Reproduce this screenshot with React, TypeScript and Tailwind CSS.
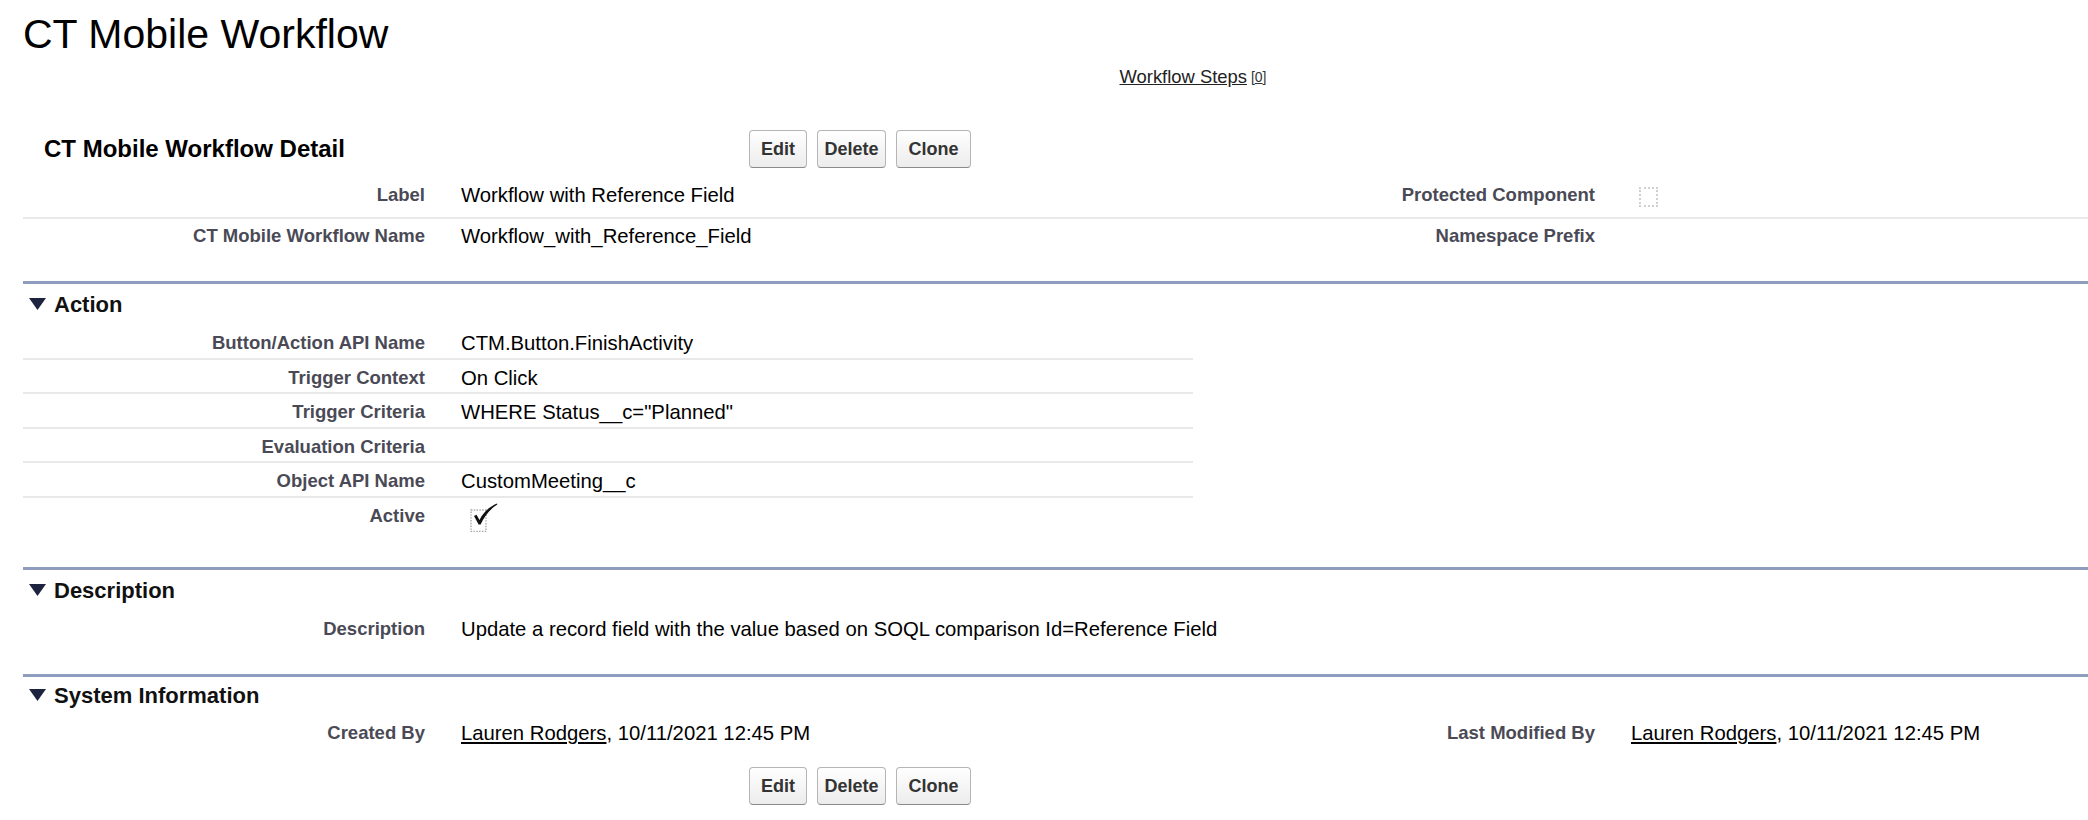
import React from 'react';

type Cell = { label: string; value?: React.ReactNode };

function Twisty() {
  return (
    <svg width="17" height="12" viewBox="0 0 17 12" className="mr-[8px] shrink-0">
      <polygon points="0,0 17,0 8.5,12" fill="#1c2440" />
    </svg>
  );
}

function EmptyCheckbox() {
  return <div className="ml-[8px] mt-[11px] w-[19px] h-[20px] border-2 border-dotted border-[#d0d0d0]" />;
}

function CheckedBox() {
  return (
    <svg width="32" height="30" viewBox="0 0 32 30" className="ml-[1px] mt-[3px]">
      <rect x="3" y="8" width="15" height="21.5" fill="none" stroke="#a8a8a8" strokeWidth="1.4" strokeDasharray="1.4 1.4" />
      <path d="M6 14 L8.5 12.8 L11.5 18 C15 10.5 21 5 29 1.5 L29.3 2.6 C22 7 16.5 14 12.6 22.5 L10.6 22.5 Z" fill="#111" />
    </svg>
  );
}

function Buttons() {
  const btn =
    'h-[38px] text-[18px] font-bold text-[#333] border border-[#b5b5b5] border-b-[#8a8a8a] rounded-[4px] bg-linear-to-b from-white to-[#ececec] flex items-center justify-center';
  return (
    <div className="flex gap-[10px]">
      <button className={`${btn} w-[58px]`}>Edit</button>
      <button className={`${btn} w-[69px]`}>Delete</button>
      <button className={`${btn} w-[75px]`}>Clone</button>
    </div>
  );
}

function Row({
  left,
  right,
  border = true,
  wide = false,
  pt = 'pt-[5px]',
  className = '',
}: {
  left: Cell;
  right?: Cell;
  border?: boolean;
  wide?: boolean;
  pt?: string;
  className?: string;
}) {
  const labelCls = `w-[421px] shrink-0 pr-[19px] ${pt} text-right text-[18.5px] leading-[24px] font-bold text-[#4a4a56]`;
  return (
    <div
      className={`flex ${wide ? 'w-full' : 'w-[1170px]'} ${border ? 'border-b-2 border-[#e9e9e9]' : ''} ${className}`}
    >
      <div className={labelCls}>{left.label}</div>
      <div
        className={`${right || !wide ? 'w-[749px] shrink-0' : 'flex-1'} pl-[17px] ${pt} whitespace-nowrap text-[20.3px] leading-[24px] text-black`}
      >
        {left.value}
      </div>
      {right && (
        <>
          <div className={labelCls}>{right.label}</div>
          <div className="flex-1 pl-[17px] whitespace-nowrap text-[20.3px] leading-[24px] text-black">{right.value}</div>
        </>
      )}
    </div>
  );
}

function Section({ title, headerH, bodyH, children }: { title: string; headerH: string; bodyH: string; children: React.ReactNode }) {
  return (
    <div className="border-t-[3px] border-[#8e9dbe]">
      <div className={`${headerH} flex items-center pl-[6px]`}>
        <Twisty />
        <h3 className="text-[22px] font-bold text-[#111]">{title}</h3>
      </div>
      <div className={`${bodyH} pt-[1px]`}>{children}</div>
    </div>
  );
}

function UserLink() {
  return (
    <span>
      <span className="underline">Lauren Rodgers</span>, 10/11/2021 12:45 PM
    </span>
  );
}

export default function App() {
  const actionRows: Cell[] = [
    { label: 'Button/Action API Name', value: 'CTM.Button.FinishActivity' },
    { label: 'Trigger Context', value: 'On Click' },
    { label: 'Trigger Criteria', value: 'WHERE Status__c="Planned"' },
    { label: 'Evaluation Criteria', value: '' },
    { label: 'Object API Name', value: 'CustomMeeting__c' },
  ];

  return (
    <div className="w-[2088px] h-[820px] overflow-hidden bg-white font-['Liberation_Sans',Arial,sans-serif]">
      <div className="w-[2340px] ml-[23px]">
        <h1 className="h-[56px] pt-[12px] text-[41px] leading-[44px] text-black">CT Mobile Workflow</h1>

        <div className="h-[42px] flex items-center justify-center text-[18.4px] text-[#222]">
          <span className="underline">Workflow Steps</span>
          <span className="ml-[4px] text-[14px] text-[#333]">
            [<span className="underline">0</span>]
          </span>
        </div>

        <div className="h-[78px] pt-[32px] flex items-start">
          <h2 className="w-[726px] pl-[21px] text-[24px] leading-[38px] font-bold text-black">CT Mobile Workflow Detail</h2>
          <Buttons />
        </div>

        <div className="h-[105px]">
          <Row
            wide
            pt="pt-[7px]"
            className="h-[43px]"
            left={{ label: 'Label', value: 'Workflow with Reference Field' }}
            right={{ label: 'Protected Component', value: <EmptyCheckbox /> }}
          />
          <Row
            wide
            pt="pt-[5px]"
            border={false}
            left={{ label: 'CT Mobile Workflow Name', value: 'Workflow_with_Reference_Field' }}
            right={{ label: 'Namespace Prefix', value: '' }}
          />
        </div>

        <Section title="Action" headerH="h-[40px]" bodyH="h-[243px]">
          {actionRows.map((r) => (
            <Row key={r.label} pt="pt-[6px]" className="h-[34.5px]" left={r} />
          ))}
          <Row border={false} pt="pt-[6px]" left={{ label: 'Active', value: '' }} />
          <div className="-mt-[29px] ml-[444px]">
            <CheckedBox />
          </div>
        </Section>

        <Section title="Description" headerH="h-[40px]" bodyH="h-[64px]">
          <Row
            wide
            border={false}
            pt="pt-[6px]"
            left={{
              label: 'Description',
              value: 'Update a record field with the value based on SOQL comparison Id=Reference Field',
            }}
          />
        </Section>

        <Section title="System Information" headerH="h-[36px]" bodyH="h-[110px]">
          <Row
            wide
            border={false}
            pt="pt-[7px]"
            left={{ label: 'Created By', value: <UserLink /> }}
            right={{ label: 'Last Modified By', value: <div className="pt-[7px]"><UserLink /></div> }}
          />
          <div className="mt-[22px] ml-[726px]">
            <Buttons />
          </div>
        </Section>
      </div>
    </div>
  );
}
